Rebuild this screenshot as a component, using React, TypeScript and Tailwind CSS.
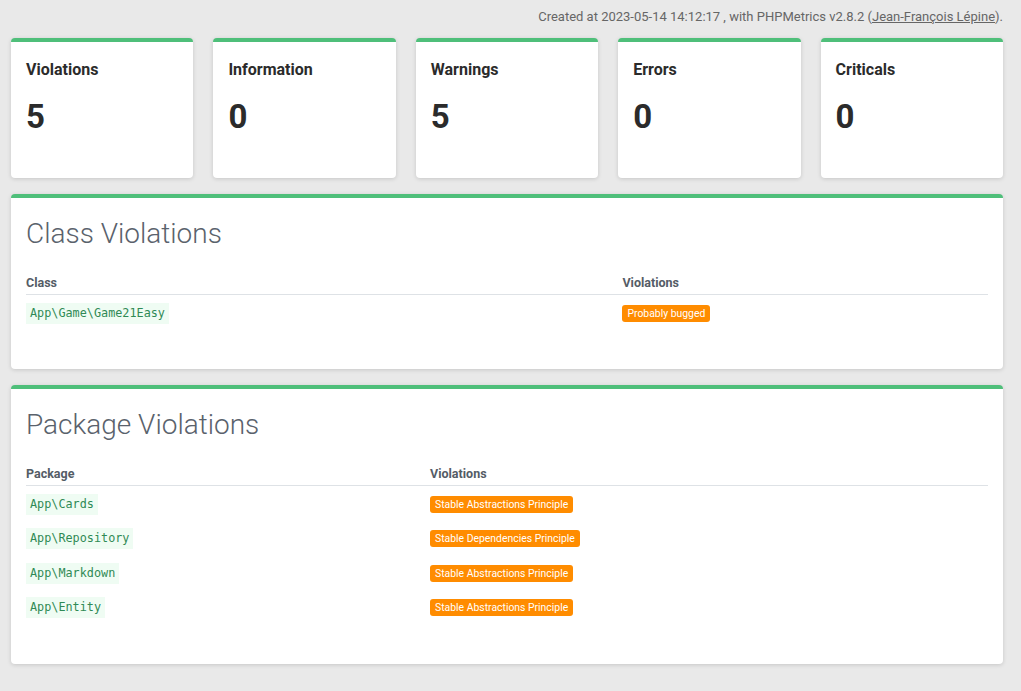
import React from "react";

const summary = [
  { label: "Violations", value: 5 },
  { label: "Information", value: 0 },
  { label: "Warnings", value: 5 },
  { label: "Errors", value: 0 },
  { label: "Criticals", value: 0 },
];

const classRows = [{ name: "App\\Game\\Game21Easy", violations: ["Probably bugged"] }];

const packageRows = [
  { name: "App\\Cards", violations: ["Stable Abstractions Principle"] },
  { name: "App\\Repository", violations: ["Stable Dependencies Principle"] },
  { name: "App\\Markdown", violations: ["Stable Abstractions Principle"] },
  { name: "App\\Entity", violations: ["Stable Abstractions Principle"] },
];

function Badge({ text }: { text: string }) {
  return (
    <span className="inline-block rounded-[3px] bg-[#ff8c00] px-[5px] py-[2px] text-[10.4px] leading-[13px] text-white">
      {text}
    </span>
  );
}

function ViolationTable({
  title,
  column,
  firstWidth,
  rows,
}: {
  title: string;
  column: string;
  firstWidth: string;
  rows: { name: string; violations: string[] }[];
}) {
  return (
    <div className="rounded-[4px] border-t-4 border-[#4fbf7a] bg-white px-[15px] pt-[19px] pb-[40px] shadow-[0_1px_4px_rgba(0,0,0,0.15)]">
      <h2 className="text-[28px] font-light leading-[34px] text-[#5a626c]">{title}</h2>
      <table className="mt-[24px] w-full border-collapse">
        <thead>
          <tr className="border-b border-[#dee2e6]">
            <th className={`${firstWidth} pb-[3px] text-left text-[12.5px] leading-[16px] font-bold text-[#545c66]`}>
              {column}
            </th>
            <th className="pb-[3px] text-left text-[12.5px] leading-[16px] font-bold text-[#545c66]">Violations</th>
          </tr>
        </thead>
        <tbody>
          {rows.map((r) => (
            <tr key={r.name} className="h-[34.5px]">
              <td className="align-middle">
                <code className="inline-block bg-[#effcf3] px-[4px] py-[2px] font-['DejaVu_Sans_Mono',monospace] text-[11.8px] leading-[17px] text-[#2f8a55]">
                  {r.name}
                </code>
              </td>
              <td className="align-middle">
                {r.violations.map((v) => (
                  <Badge key={v} text={v} />
                ))}
              </td>
            </tr>
          ))}
        </tbody>
      </table>
    </div>
  );
}

export default function App() {
  return (
    <div className="min-h-[691px] bg-[#e9e9e9] pl-[11px] pr-[18px] font-['Roboto',sans-serif] text-[#333]">
      {/* header */}
      <div className="pt-[8px] text-right text-[13px] leading-[18px] text-[#666]">
        Created at 2023-05-14 14:12:17 , with PHPMetrics v2.8.2 (
        <a className="underline">Jean-François Lépine</a>).
      </div>

      {/* summary cards */}
      <div className="mt-[12px] grid grid-cols-5 gap-[20px]">
        {summary.map((s) => (
          <div
            key={s.label}
            className="h-[140px] rounded-[4px] border-t-4 border-[#4fbf7a] bg-white px-[15px] pt-[18px] shadow-[0_1px_4px_rgba(0,0,0,0.15)]"
          >
            <div className="text-[16px] font-bold leading-[20px] text-[#2b2b2b]">{s.label}</div>
            <div className="mt-[17px] text-[33px] font-bold leading-[40px] text-[#2b2b2b]">{s.value}</div>
          </div>
        ))}
      </div>

      <div className="mt-[16px] flex flex-col gap-[16px]">
        <ViolationTable title="Class Violations" column="Class" firstWidth="w-[62%]" rows={classRows} />
        <ViolationTable title="Package Violations" column="Package" firstWidth="w-[42%]" rows={packageRows} />
      </div>
    </div>
  );
}
